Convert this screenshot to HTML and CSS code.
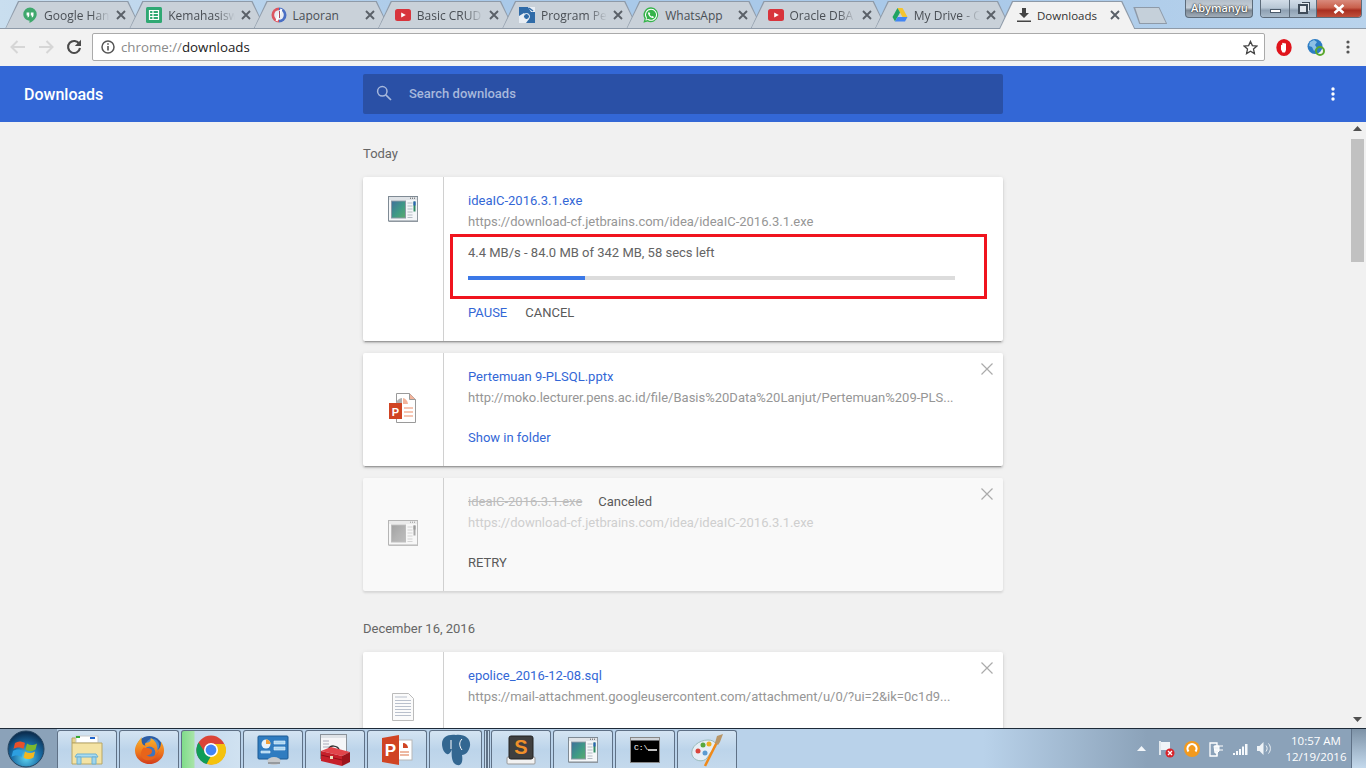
FILE: index.html
```html
<!DOCTYPE html>
<html>

<head>
    <title>Downloads</title>
    <link rel="stylesheet" href="styles.css">
</head>

<body>
    <svg class="sprite">
        <defs>
            <linearGradient id="app-pane" x1="0" y1="0" x2="1" y2="1">
                <stop offset="0" stop-color="#3f6f9c" />
                <stop offset=".55" stop-color="#3f9a86" />
                <stop offset="1" stop-color="#5cab6c" />
            </linearGradient>
        </defs>
        <symbol id="yt" viewBox="0 0 16 16">
            <rect x="0" y="2" width="16" height="12" rx="2.5" fill="#d8343c" />
            <path d="M6.2 5.4 L10.8 8 L6.2 10.6 Z" fill="#fff" />
        </symbol>
        <symbol id="tab-x" viewBox="0 0 10 10">
            <path d="M1 1 L9 9 M9 1 L1 9" stroke="#5a6068" stroke-width="1.9" fill="none" />
        </symbol>
        <symbol id="card-x" viewBox="0 0 12 12">
            <path d="M.5 .5 L11.5 11.5 M11.5 .5 L.5 11.5" stroke="#ababab" stroke-width="1.2" fill="none" />
        </symbol>
        <symbol id="app-icon" viewBox="0 0 30 26">
            <rect x=".5" y=".5" width="29" height="24.5" fill="#f4f6f8" stroke="#7f8a94" />
            <path d="M1 25.500h29M29.500 1v25" stroke="#8f979f" />
            <rect x="1" y="1" width="28" height="3" fill="#dfe3e7" />
            <path d="M24 2.2h1M26 2.2h1M22 2.2h1" stroke="#555" />
            <rect x="3.5" y="5" width="14" height="17" fill="url(#app-pane)" stroke="#8c99a5" />
            <path d="M19.500 7h5M19.500 10h5M19.500 13h5M19.500 16h5M19.500 19h5M19.500 21.500h5" stroke="#b4bcc4" />
            <rect x="25.500" y="5.500" width="2" height="10" fill="#2f8a63" />
            <rect x="25.500" y="5.500" width="2" height="4" fill="#2b62b8" />
        </symbol>
    </svg>

    <div class="tabstrip">
        <div class="tab">
            <svg class="favicon" viewBox="0 0 16 16"><path d="M8 .5a6.700 6.700 0 0 0-6.700 6.700c0 3.700 3 6.300 6.200 6.300V16c3.600-1.700 7.200-5 7.200-8.800A6.700 6.700 0 0 0 8 .5z" fill="#3fa86d" /><path d="M4.600 5.500h2.700v2.700c0 1.200-.7 2-1.700 2.300v-2H4.600zM8.800 5.500h2.700v2.700c0 1.200-.7 2-1.700 2.300v-2H8.800z" fill="#fff" /></svg>
            <span class="tab-title fade">Google Han</span>
            <svg class="tab-close"><use href="#tab-x" /></svg>
        </div>
        <div class="tab">
            <svg class="favicon" viewBox="0 0 16 16"><rect width="16" height="16" rx="1.500" fill="#2fa873" /><path d="M3.500 3.500h9v9h-9zM3.500 6.500h9M3.500 9.500h9M7 3.500v9" stroke="#fff" stroke-width="1.200" fill="none" /></svg>
            <span class="tab-title fade">Kemahasisw</span>
            <svg class="tab-close"><use href="#tab-x" /></svg>
        </div>
        <div class="tab">
            <svg class="favicon" viewBox="0 0 16 16"><path d="M8 .5a7.500 7.500 0 0 0 0 15z" fill="#dc5560" /><path d="M8 .5a7.500 7.500 0 0 1 0 15z" fill="#4a6fc4" /><circle cx="8" cy="8" r="4.800" fill="#e9edf3" /><path d="M5.500 14 L10.500 2" stroke="#fff" stroke-width="2" /><path d="M8.500 4v7" stroke="#b0475c" /></svg>
            <span class="tab-title">Laporan</span>
            <svg class="tab-close"><use href="#tab-x" /></svg>
        </div>
        <div class="tab">
            <svg class="favicon"><use href="#yt" /></svg>
            <span class="tab-title fade">Basic CRUD</span>
            <svg class="tab-close"><use href="#tab-x" /></svg>
        </div>
        <div class="tab">
            <svg class="favicon" viewBox="0 0 16 16"><rect width="16" height="16" fill="#2f6ba8" /><path d="M9 0h7v5h-4zM0 9l5-3 5 6-3 4H0z" fill="#e8eef5" /><circle cx="7.500" cy="9.500" r="3" fill="#2f6ba8" stroke="#fff" /><path d="M10 1l4 3" stroke="#2f6ba8" stroke-width="1.500" /></svg>
            <span class="tab-title fade">Program Pe</span>
            <svg class="tab-close"><use href="#tab-x" /></svg>
        </div>
        <div class="tab">
            <svg class="favicon" viewBox="0 0 16 16"><path d="M8 .3a7.500 7.500 0 0 0-6.400 11.400L.4 15.700l4.100-1.100A7.500 7.500 0 1 0 8 .3z" fill="#35b34a" /><path d="M8 1.800a6 6 0 0 0-5 9.300l-.6 2.400 2.500-.6A6 6 0 1 0 8 1.800z" fill="#fff" /><path d="M8 2.800a5 5 0 0 0-4.100 7.900l-.4 1.700 1.800-.4A5 5 0 1 0 8 2.800z" fill="#35b34a" /><path d="M6 5c-.6.200-1 .9-.9 1.700.3 1.800 2.300 3.900 4.200 4.200.8.100 1.500-.4 1.700-1l-1.600-1-.7.600c-.9-.4-1.600-1.100-2-2l.6-.8z" fill="#fff" /></svg>
            <span class="tab-title">WhatsApp</span>
            <svg class="tab-close"><use href="#tab-x" /></svg>
        </div>
        <div class="tab">
            <svg class="favicon"><use href="#yt" /></svg>
            <span class="tab-title fade">Oracle DBA</span>
            <svg class="tab-close"><use href="#tab-x" /></svg>
        </div>
        <div class="tab">
            <svg class="favicon" viewBox="0 0 16 16"><path d="M5.500 1h5l5 9h-5z" fill="#f4c430" /><path d="M5.500 1l-5 9 2.500 4.500 5-9z" fill="#1fa463" /><path d="M3 14.500l2.500-4.500h10L13 14.500z" fill="#4285f4" /></svg>
            <span class="tab-title fade">My Drive - C</span>
            <svg class="tab-close"><use href="#tab-x" /></svg>
        </div>
        <div class="tab active">
            <svg class="favicon" viewBox="0 0 16 16"><path d="M6 1h4v5h3l-5 5-5-5h3zM1 13.500h14V15H1z" fill="#444" /></svg>
            <span class="tab-title">Downloads</span>
            <svg class="tab-close"><use href="#tab-x" /></svg>
        </div>
        <div class="new-tab"></div>
        <div class="user-badge">Abymanyu</div>
        <div class="win-controls">
            <div class="win-btn min"><span class="min-bar"></span></div>
            <div class="win-btn restore"><span class="restore-box"></span></div>
            <div class="win-btn close">
                <svg width="14" height="10" viewBox="0 0 14 10"><path d="M2.500 1 L11.500 9 M11.500 1 L2.500 9" stroke="#fff" stroke-width="2.600" /></svg>
            </div>
        </div>
    </div>

    <div class="toolbar">
        <div class="tool-btn">
            <svg width="16" height="14" viewBox="0 0 16 14"><path d="M15 7H2M7.500 1 L1.500 7 L7.500 13" stroke="#d6d6d6" stroke-width="2" fill="none" /></svg>
        </div>
        <div class="tool-btn">
            <svg width="16" height="14" viewBox="0 0 16 14"><path d="M1 7h13M8.500 1 L14.500 7 L8.500 13" stroke="#d6d6d6" stroke-width="2" fill="none" /></svg>
        </div>
        <div class="tool-btn">
            <svg width="16" height="16" viewBox="0 0 16 16"><path d="M13.300 5A6 6 0 1 0 14 9" stroke="#4a4a4a" stroke-width="2.100" fill="none" /><path d="M15 .8V7H8.800z" fill="#4a4a4a" /></svg>
        </div>
        <div class="omnibox">
            <svg class="info" width="14" height="14" viewBox="0 0 14 14"><circle cx="7" cy="7" r="6" stroke="#555" stroke-width="1.500" fill="none" /><path d="M7 6v4.500M7 3.300v1.500" stroke="#555" stroke-width="1.600" /></svg>
            <span class="url"><span class="url-scheme">chrome://</span>downloads</span>
            <svg class="star" width="15" height="15" viewBox="0 0 16 16"><path d="M8 1.500l2 4.500 4.800.5-3.600 3.200 1 4.800L8 12l-4.200 2.500 1-4.800L1.200 6.500 6 6z" stroke="#444" stroke-width="1.400" fill="none" /></svg>
        </div>
        <div class="extensions">
            <div class="ext-btn">
                <svg width="16" height="17" viewBox="0 0 16 17"><ellipse cx="8" cy="8.500" rx="6.500" ry="7.200" stroke="#e0141c" stroke-width="2.400" fill="#e0141c" /><path d="M5 6.500c0-1 1.200-1 1.200 0V4.500c0-1 1.200-1 1.200 0 0-1 1.300-1 1.300 0v.5c0-1 1.300-1 1.300 0v6l-1 2.500H6.500L5 10.500z" fill="#fff" /></svg>
            </div>
            <div class="ext-btn">
                <svg width="18" height="18" viewBox="0 0 18 18"><circle cx="8" cy="8.500" r="7.500" fill="#2c7cc4" /><path d="M3 4l4-2 3 2-2 3 2 3-3 3-2-4-3-1z" fill="#8cc0e6" /><circle cx="13" cy="13" r="4" fill="none" stroke="#5aa82e" stroke-width="2" /></svg>
            </div>
            <div class="ext-btn">
                <svg width="4" height="14" viewBox="0 0 4 14"><circle cx="2" cy="2" r="1.600" fill="#555" /><circle cx="2" cy="7" r="1.600" fill="#555" /><circle cx="2" cy="12" r="1.600" fill="#555" /></svg>
            </div>
        </div>
    </div>

    <header class="dl-header">
        <div class="dl-heading">Downloads</div>
        <div class="search-box">
            <svg width="16" height="16" viewBox="0 0 16 16"><circle cx="6.300" cy="6.300" r="4.700" stroke="#a7b8dc" stroke-width="1.500" fill="none" /><path d="M9.800 9.800 L15 15" stroke="#a7b8dc" stroke-width="1.700" /></svg>
            <span>Search downloads</span>
        </div>
        <div class="header-menu">
            <svg width="4" height="14" viewBox="0 0 4 14"><circle cx="2" cy="2" r="1.700" fill="#fff" /><circle cx="2" cy="7" r="1.700" fill="#fff" /><circle cx="2" cy="12" r="1.700" fill="#fff" /></svg>
        </div>
    </header>

    <main class="content">
        <div class="column">
            <div class="date-label first">Today</div>

            <div class="card">
                <div class="card-icon top">
                    <svg width="30" height="26"><use href="#app-icon" /></svg>
                </div>
                <div class="card-body">
                    <a class="file-name">ideaIC-2016.3.1.exe</a>
                    <div class="file-url">https://download-cf.jetbrains.com/idea/ideaIC-2016.3.1.exe</div>
                    <div class="status">4.4 MB/s - 84.0 MB of 342 MB, 58 secs left</div>
                    <div class="progress"><div class="progress-fill" style="width: 24%"></div></div>
                    <div class="actions">
                        <a class="link-blue">PAUSE</a>
                        <a class="link-grey">CANCEL</a>
                    </div>
                </div>
                <div class="highlight"></div>
            </div>

            <div class="card">
                <div class="card-icon">
                    <svg width="27" height="30" viewBox="0 0 27 30">
                        <path d="M7.500 .5h13l6 6v23h-19z" fill="#fff" stroke="#9a9a9a" />
                        <path d="M20.500 .5v6h6" fill="#f3b49b" stroke="#9a9a9a" />
                        <path d="M13 5a7 7 0 0 0-4 12l4-5z" fill="#b0b0b0" />
                        <path d="M14 5a7 7 0 0 1 5 6h-5z" fill="#f3b49b" />
                        <path d="M15 15h9M15 19h9M15 23h9" stroke="#f3b49b" stroke-width="1.500" />
                        <rect x="0" y="10" width="13" height="16" fill="#d04423" />
                        <text x="6.500" y="22.500" class="ppt-letter">P</text>
                    </svg>
                </div>
                <div class="card-body">
                    <a class="file-name">Pertemuan 9-PLSQL.pptx</a>
                    <div class="file-url">http://moko.lecturer.pens.ac.id/file/Basis%20Data%20Lanjut/Pertemuan%209-PLS...</div>
                    <div class="actions tall">
                        <a class="link-blue">Show in folder</a>
                    </div>
                </div>
                <svg class="card-close"><use href="#card-x" /></svg>
            </div>

            <div class="card canceled">
                <div class="card-icon">
                    <svg class="muted-icon" width="30" height="26"><use href="#app-icon" /></svg>
                </div>
                <div class="card-body">
                    <div class="name-row">
                        <a class="file-name">ideaIC-2016.3.1.exe</a>
                        <span class="tag">Canceled</span>
                    </div>
                    <div class="file-url">https://download-cf.jetbrains.com/idea/ideaIC-2016.3.1.exe</div>
                    <div class="actions tall">
                        <a class="link-grey">RETRY</a>
                    </div>
                </div>
                <svg class="card-close"><use href="#card-x" /></svg>
            </div>

            <div class="date-label">December 16, 2016</div>

            <div class="card">
                <div class="card-icon">
                    <svg width="24" height="28" viewBox="0 0 24 28">
                        <path d="M1.500 .5h16l5 5v22h-21z" fill="#fbfbfb" stroke="#bbb" />
                        <path d="M4 4h12M4 7.500h16M4 10.500h16M4 13.500h16M4 16.500h16M4 19.500h16M4 22.500h16" stroke="#b9c0cc" />
                    </svg>
                </div>
                <div class="card-body">
                    <a class="file-name">epolice_2016-12-08.sql</a>
                    <div class="file-url">https://mail-attachment.googleusercontent.com/attachment/u/0/?ui=2&amp;ik=0c1d9...</div>
                </div>
                <svg class="card-close"><use href="#card-x" /></svg>
            </div>
        </div>

        <div class="scrollbar">
            <svg class="scroll-arrow" width="9" height="5" viewBox="0 0 9 5"><path d="M4.500 0 L9 5 H0 Z" fill="#505050" /></svg>
            <div class="scroll-track"><div class="scroll-thumb"></div></div>
            <svg class="scroll-arrow" width="9" height="5" viewBox="0 0 9 5"><path d="M0 0 H9 L4.500 5 Z" fill="#505050" /></svg>
        </div>
    </main>

    <footer class="taskbar">
        <div class="start">
            <svg width="38" height="38" viewBox="0 0 38 38">
                <defs>
                    <radialGradient id="orb" cx="50%" cy="75%" r="70%">
                        <stop offset="0" stop-color="#5fd4f0" />
                        <stop offset=".55" stop-color="#1a6ea8" />
                        <stop offset="1" stop-color="#0c2f52" />
                    </radialGradient>
                </defs>
                <circle cx="19" cy="19" r="18" fill="url(#orb)" stroke="#26445f" />
                <path d="M8 13c3-2 6-2 10 0l-1.500 6c-3-2-7-2-10 0z" fill="#e8502a" />
                <path d="M20 13.500c3 2 6 2 10 0l-1.500 6c-4 2-7 2-10 0z" fill="#7cb82f" />
                <path d="M6 21c3-2 7-2 10 0l-1.500 6c-3-2-7-2-10 0z" fill="#2d9fe0" />
                <path d="M18 21.500c3 2 6 2 10 0l-1.500 6c-4 2-7 2-10 0z" fill="#f2b71f" />
            </svg>
        </div>
        <div class="task-buttons">
            <div class="task-btn">
                <svg width="32" height="30" viewBox="0 0 32 30"><path d="M1 3h10l2 2h12l1 3H1z" fill="#e8d48e" stroke="#b8a665" /><rect x="5" y="1" width="22" height="7" fill="#fff" stroke="#c9c9c9" /><path d="M5 2h4" stroke="#3a3" stroke-width="2" /><path d="M19 3h5" stroke="#26c" stroke-width="2" /><path d="M1 8h30v21H1z" fill="#f4e3a4" stroke="#b8a665" /><path d="M6 19h19l2 3H4z" fill="#a9dcf2" stroke="#6cb1d2" /><path d="M6 22h4v7H6zM21 22h4v7h-4z" fill="#9fd5ec" stroke="#6cb1d2" /></svg>
            </div>
            <div class="task-btn">
                <svg width="31" height="31" viewBox="0 0 32 32">
                    <defs>
                        <linearGradient id="fox" x1="0" y1="0" x2="0" y2="1">
                            <stop offset="0" stop-color="#f8b62c" />
                            <stop offset=".55" stop-color="#ee7a1e" />
                            <stop offset="1" stop-color="#d23c1c" />
                        </linearGradient>
                    </defs>
                    <circle cx="16" cy="16" r="14" fill="#2c5ea6" />
                    <circle cx="19" cy="12" r="7" fill="#4a8ad0" />
                    <path d="M8 3C4 8 1 12 1 17c0 8 7 14 15 14s15-6 15-14c0-3-1-6-3-9 0 4-1 7-4 9 1-5-2-11-7-13 1 3-1 5-4 5-2 0-2 2-1 3-3 0-5-3-4-9z" fill="url(#fox)" />
                    <circle cx="16" cy="19" r="6" fill="#3f74bd" />
                    <path d="M10 14c3 1 6 0 8 2 2 3-1 6-5 6 4 3 11 1 13-6-1 8-7 12-13 11-6-1-8-8-3-13z" fill="#e8641a" />
                </svg>
            </div>
            <div class="task-btn running">
                <svg width="30" height="30" viewBox="0 0 30 30"><circle cx="15" cy="15" r="14.500" fill="#db4437" /><path d="M15 9h13.500A14.500 14.500 0 0 1 11 29z" fill="#f4c20d" /><path d="M15 21 L10.500 29A14.500 14.500 0 0 1 2.500 7.500 L10 19z" fill="#0f9d58" /><circle cx="15" cy="15" r="7" fill="#fff" /><circle cx="15" cy="15" r="5.400" fill="#4285f4" /></svg>
            </div>
            <div class="task-btn">
                <svg width="32" height="32" viewBox="0 0 32 32"><rect x="1" y="2" width="30" height="23" rx="1" fill="#2f7cc0" stroke="#1c5a94" /><circle cx="9" cy="10" r="4.500" fill="#e8f2fa" /><path d="M9 10V5.500A4.500 4.500 0 0 1 13.500 10z" fill="#f2a13a" /><path d="M17 7h11v3H17zM17 13h11v3H17zM4 17h9v2H4z" fill="#a8d6f2" stroke="#e8f2fa" stroke-width=".6" /><ellipse cx="17" cy="27" rx="6.500" ry="4" fill="#c6c9cc" /><path d="M11 28h12v2H11z" fill="#969a9e" /></svg>
            </div>
            <div class="task-btn">
                <svg width="32" height="32" viewBox="0 0 32 32">
                    <rect x="1.500" y=".5" width="26" height="24" fill="#f5f6f8" stroke="#8a929a" />
                    <rect x="2" y="1" width="25" height="3" fill="#dfe3e7" />
                    <path d="M4 7h6M4 10h6M4 13h6" stroke="#aab" />
                    <path d="M10 15c0-4 9-4 10 1" stroke="#333" stroke-width="1.500" fill="none" />
                    <path d="M2 17 L12 13 L31 18 L23 22 Z" fill="#e2444a" />
                    <path d="M2 17 L23 22 V32 L2 27 Z" fill="#c6202a" />
                    <path d="M23 22 L31 18 V28 L23 32 Z" fill="#9c141c" />
                    <path d="M2 21 L23 26" stroke="#8f1018" />
                    <rect x="11" y="22" width="3" height="3" fill="#e8e0c0" />
                </svg>
            </div>
            <div class="task-btn">
                <svg width="31" height="30" viewBox="0 0 31 30"><rect x="14" y="5" width="16" height="20" fill="#fff" stroke="#b8b8b8" /><path d="M18 17h9M18 20h9" stroke="#e8a184" stroke-width="1.500" /><path d="M21 8a5 5 0 0 1 5 5h-5z" fill="#d04423" /><path d="M0 3 L17 0 V30 L0 27 Z" fill="#d04423" /><text x="8.500" y="21" class="ppt-task-letter">P</text></svg>
            </div>
            <div class="task-btn narrow">
                <svg width="30" height="32" viewBox="0 0 30 32"><path d="M15 1C7 0 1 3 1 10c0 4 2 9 5 10 2 1 4-2 5-5-1 6 0 15 5 16 5 1 6-4 5-10 4 0 7-4 8-9 1-7-5-12-14-11z" fill="#336791" /><path d="M10 6v9M21 5c-3 3-3 7 0 11" stroke="#fff" stroke-width="1" fill="none" /></svg>
            </div>
            <div class="task-stack"></div>
            <div class="task-stack"></div>
            <div class="task-btn">
                <svg width="30" height="30" viewBox="0 0 30 30"><rect x="1" y="22" width="28" height="7" rx="1" fill="#f2f2f2" stroke="#999" /><rect x="3" y="1" width="24" height="23" rx="2" fill="#3f3f3f" stroke="#222" /><text x="15" y="19" class="sublime-letter">S</text></svg>
            </div>
            <div class="task-btn">
                <svg width="30" height="26"><use href="#app-icon" /></svg>
            </div>
            <div class="task-btn">
                <svg width="30" height="26" viewBox="0 0 30 26"><rect x=".5" y=".5" width="29" height="25" fill="#000" stroke="#888" /><rect x="1" y="1" width="28" height="2.500" fill="#cfd4d9" /><text x="4" y="13" class="cmd-prompt">C:\</text><path d="M18 13h9" stroke="#fff" stroke-width="1.500" /></svg>
            </div>
            <div class="task-btn">
                <svg width="34" height="34" viewBox="0 0 34 34"><path d="M2 22C0 14 9 7 18 7c8 0 10 6 6 9-3 2-4 5-7 9-4 5-13 3-15-3z" fill="#e6eef5" stroke="#9bb" /><circle cx="8" cy="18" r="2.500" fill="#d9463c" /><circle cx="13" cy="12" r="2.500" fill="#58a83c" /><circle cx="19" cy="11" r="2.500" fill="#ecae20" /><circle cx="15" cy="20" r="2.500" fill="#5d9bd0" /><path d="M15 33 L27 9" stroke="#ef8a1a" stroke-width="2.500" /><path d="M25 10l2-7 6-2-3 8-2 3z" fill="#b89668" /></svg>
            </div>
        </div>
        <div class="tray">
            <svg width="9" height="5" viewBox="0 0 9 5"><path d="M4.500 0 L9 5 H0 Z" fill="#f2f6fa" /></svg>
            <svg class="tray-flag" width="17" height="18" viewBox="0 0 17 18"><path d="M2 1v14" stroke="#fff" stroke-width="1.500" /><path d="M3 2h9v8H3z" fill="#f0f4f8" /><circle cx="12" cy="13" r="4.500" fill="#d8232a" /><path d="M10 11l4 4M14 11l-4 4" stroke="#fff" stroke-width="1.300" /></svg>
            <svg width="16" height="16" viewBox="0 0 16 16"><circle cx="8" cy="8" r="8" fill="#f39a1e" /><path d="M4.500 10.500A4.500 4.500 0 1 1 11.500 10.500" stroke="#fff" stroke-width="2.200" fill="none" /></svg>
            <svg width="15" height="16" viewBox="0 0 15 16"><path d="M1 2h7v13H1z" fill="none" stroke="#fff" stroke-width="1.300" /><path d="M6 5h8M6 9h8M5 5h5v5l-2 2H6z" stroke="#fff" fill="#eef3f7" /><path d="M8 12v3" stroke="#fff" /></svg>
            <svg width="15" height="12" viewBox="0 0 15 12"><path d="M0 10h2v2H0zM3 8h2v4H3zM6 6h2v6H6zM9 3.500h2V12H9zM12 1h2.500v11H12z" fill="#f6f9fc" /></svg>
            <svg width="15" height="15" viewBox="0 0 15 15"><path d="M0 5h2.500L6.500 1v13L2.500 10H0z" fill="#eef3f7" /><path d="M9 4.500c1.500 1.800 1.500 4.200 0 6M11.500 2.500c2.500 3 2.500 7 0 10" stroke="#eef3f7" fill="none" /></svg>
        </div>
        <div class="clock">
            <div>10:57 AM</div>
            <div>12/19/2016</div>
        </div>
        <div class="show-desktop"></div>
    </footer>
</body>

</html>
```

FILE: styles.css
```css
* {
    box-sizing: border-box;
}

html,
body {
    margin: 0;
    height: 100%;
}

body {
    display: flex;
    flex-direction: column;
    height: 768px;
    overflow: hidden;
    font-family: Roboto, "Liberation Sans", sans-serif;
    font-size: 13px;
    background-color: #f1f1f1;
}

.sprite {
    display: block;
    width: 0;
    height: 0;
}

/* tab strip */
.tabstrip {
    display: flex;
    flex: none;
    height: 29px;
    padding-left: 5px;
    padding-top: 1px;
    background: linear-gradient(90deg, #c9deef 0, #a9c9e9 35%, #a9c9e9 70%, #b9d3ec 100%);
    box-shadow: inset 0 -1px #8e9aa8;
}

.tab {
    position: relative;
    isolation: isolate;
    display: flex;
    align-items: center;
    flex: none;
    width: 136.25px;
    height: 28px;
    margin-right: -12px;
    padding: 0 15px 0 17px;
    font-family: "Open Sans", "Noto Sans", sans-serif;
    font-size: 12px;
    color: #4a4f55;
}

.tab::before,
.tab::after {
    content: "";
    position: absolute;
    z-index: -1;
}

.tab::before {
    inset: 0;
    background-color: #8e9aa8;
    clip-path: polygon(0 100%, 13px 0, calc(100% - 13px) 0, 100% 100%);
}

.tab::after {
    inset: 1px 1px 1px 1px;
    background-color: #c9d1d9;
    clip-path: polygon(0 100%, 13px 0, calc(100% - 13px) 0, 100% 100%);
}

.tab.active {
    z-index: 2;
    color: #333;
}

.tab.active::after {
    bottom: 0;
    background-color: #f2f2f2;
}

.favicon {
    flex: none;
    width: 16px;
    height: 16px;
}

.tab-title {
    flex: 1;
    min-width: 0;
    margin-left: 6px;
    white-space: nowrap;
}

.tab-title.fade {
    -webkit-mask-image: linear-gradient(90deg, #000 72%, transparent 100%);
    mask-image: linear-gradient(90deg, #000 72%, transparent 100%);
}

.tab.active .tab-title {
    margin-left: 5px;
    font-size: 11.500px;
}

.tab-close {
    flex: none;
    width: 10px;
    height: 10px;
    margin-left: 6px;
}

.new-tab {
    flex: none;
    width: 34px;
    height: 17px;
    margin: 6px 0 0 10px;
    background-color: #8e9aa8;
    clip-path: polygon(0 0, 26px 0, 100% 100%, 6px 100%);
}

.new-tab::after {
    content: "";
    display: block;
    width: 100%;
    height: 100%;
    background-color: #c5d0da;
    clip-path: polygon(2px 1px, 25.500px 1px, 32.500px 16px, 7px 16px);
}

.user-badge {
    flex: none;
    width: 68px;
    height: 18px;
    margin: -1px 0 0 18px;
    border: 1px solid #5c6b7a;
    border-top: 0;
    border-radius: 0 0 4px 4px;
    background: linear-gradient(#b3bec9, #c6cfd8 45%, #7d8995 60%, #a0acb8);
    color: #fff;
    font-family: "Open Sans", sans-serif;
    font-size: 11px;
    font-weight: 600;
    line-height: 16px;
    text-align: center;
    text-shadow: 0 0 2px #222, 0 0 1px #222;
}

.win-controls {
    display: flex;
    flex: none;
    width: 102px;
    height: 18px;
    margin: -1px 0 0 7px;
    border: 1px solid #5c6b7a;
    border-top: 0;
    border-radius: 0 0 4px 4px;
    overflow: hidden;
}

.win-btn {
    display: flex;
    align-items: center;
    justify-content: center;
    background: linear-gradient(#d2dde8, #b9c8d6 45%, #8fa1b3 60%, #a8b9c9);
    border-right: 1px solid #5c6b7a;
}

.min {
    width: 29px;
}

.restore {
    width: 27px;
}

.close {
    flex: 1;
    border-right: 0;
    background: linear-gradient(#d98a7c, #c9604c 45%, #a92f20 60%, #c0503c);
}

.min-bar {
    width: 11px;
    height: 4px;
    margin-top: 5px;
    border: 1px solid #4a5a6a;
    background-color: #fff;
}

.restore-box {
    width: 10px;
    height: 10px;
    border: 2px solid #3f4c59;
    box-shadow: 2px -2px 0 -1px #e6edf3, 3px -3px 0 -1px #3f4c59;
    background-color: #dfe6ed;
}

/* toolbar */
.toolbar {
    display: flex;
    align-items: center;
    flex: none;
    height: 37px;
    padding: 0 2px 1px 4px;
    background-color: #f2f2f2;
}

.tool-btn {
    display: flex;
    align-items: center;
    justify-content: center;
    flex: none;
    width: 28px;
    height: 28px;
}

.omnibox {
    display: flex;
    align-items: center;
    flex: 1;
    height: 28px;
    margin: 0 3px 0 4px;
    padding: 0 6px 0 8px;
    border: 1px solid #aaa;
    border-radius: 2px;
    background-color: #fff;
}

.url {
    flex: 1;
    margin-left: 6px;
    font-family: "Open Sans", "Noto Sans", sans-serif;
    font-size: 13.300px;
    color: #222;
}

.url-scheme {
    color: #8a8a8a;
}

.extensions {
    display: flex;
    flex: none;
}

.ext-btn {
    display: flex;
    align-items: center;
    justify-content: center;
    width: 32px;
    height: 28px;
}

/* downloads page header */
.dl-header {
    display: grid;
    grid-template-columns: 1fr 640px 1fr;
    align-items: center;
    flex: none;
    height: 56px;
    background-color: #3367d6;
}

.dl-heading {
    padding: 1px 0 0 24px;
    font-size: 16px;
    font-weight: 500;
    color: #fff;
}

.search-box {
    display: flex;
    align-items: center;
    gap: 17px;
    height: 40px;
    padding: 0 0 2px 13px;
    border-radius: 2px;
    background-color: #2a50a6;
    color: #a7b8dc;
    font-weight: 500;
}

.header-menu {
    display: flex;
    justify-content: flex-end;
    padding-right: 31px;
}

/* list */
.content {
    position: relative;
    flex: 1;
    min-height: 0;
    overflow: hidden;
}

.column {
    width: 640px;
    margin: 0 auto;
}

.date-label {
    height: 20px;
    margin: 27px 0 14px;
    line-height: 22px;
    color: #666;
}

.date-label.first {
    margin-top: 21px;
}

.card {
    position: relative;
    display: flex;
    min-height: 113px;
    margin-bottom: 12px;
    border-radius: 2px;
    background-color: #fff;
    box-shadow: 0 2px 2px rgba(0, 0, 0, .14), 0 1px 5px rgba(0, 0, 0, .1), 0 3px 1px -2px rgba(0, 0, 0, .2);
}

.card-icon {
    display: flex;
    align-items: center;
    justify-content: center;
    flex: none;
    width: 81px;
    padding: 0 1px 3px 0;
    border-right: 1px solid #d0d0d0;
}

.card-icon.top {
    align-items: flex-start;
    padding-top: 19px;
}

.card-body {
    flex: 1;
    min-width: 0;
    padding: 13px 48px 18px 24px;
    line-height: 21px;
}

.file-name {
    color: #3367d6;
}

.file-url {
    color: #969696;
    white-space: nowrap;
}

.status {
    margin-top: 10px;
    color: #646464;
}

.progress {
    height: 4px;
    margin-top: 13px;
    background-color: #dcdcdc;
}

.progress-fill {
    height: 100%;
    background-color: #3b78e7;
}

.actions {
    display: flex;
    gap: 18px;
    margin-top: 22px;
}

.actions.tall {
    margin-top: 19px;
}

.link-blue {
    color: #3367d6;
}

.link-grey {
    color: #5a5a5a;
}

.highlight {
    position: absolute;
    left: 87px;
    top: 57px;
    width: 537px;
    height: 65px;
    border: 3px solid #f0141e;
}

.card-close {
    position: absolute;
    top: 10px;
    right: 10px;
    width: 12px;
    height: 12px;
}

.canceled {
    background-color: #f9f9f9;
    box-shadow: 0 2px 2px rgba(0, 0, 0, .08), 0 1px 4px rgba(0, 0, 0, .06);
}

.name-row {
    display: flex;
    gap: 16px;
}

.canceled .file-name {
    color: #bdbdbd;
    text-decoration: line-through;
}

.canceled .file-url {
    color: #cfcfcf;
}

.tag {
    color: #5a5a5a;
}

.muted-icon {
    filter: grayscale(1) opacity(.6);
}

.ppt-letter {
    fill: #fff;
    font-family: "Liberation Sans", sans-serif;
    font-size: 11px;
    font-weight: 700;
    text-anchor: middle;
}

.ppt-task-letter {
    fill: #fff;
    font-family: "Liberation Sans", sans-serif;
    font-size: 17px;
    font-weight: 700;
    text-anchor: middle;
}

.sublime-letter {
    fill: #f0902a;
    font-family: "Liberation Sans", sans-serif;
    font-size: 20px;
    font-weight: 700;
    text-anchor: middle;
}

.cmd-prompt {
    fill: #fff;
    font-family: "Liberation Mono", monospace;
    font-size: 8px;
}

/* overlay scrollbar */
.scrollbar {
    position: absolute;
    top: 0;
    right: 0;
    bottom: 0;
    display: flex;
    flex-direction: column;
    align-items: center;
    width: 17px;
    padding: 4px 0 6px;
    background-color: #f1f1f1;
}

.scroll-track {
    flex: 1;
    width: 100%;
    padding: 8px 2px 0;
}

.scroll-thumb {
    width: 13px;
    height: 123px;
    background-color: #c1c1c1;
}

/* windows taskbar */
.taskbar {
    display: flex;
    flex: none;
    height: 40px;
    border-top: 1px solid #1d2a38;
    background: linear-gradient(90deg, #b9d2ea 0, #b9d2ea 72%, #8ba2b9 84%, #8ba2b9 100%);
    color: #fff;
}

.start {
    display: flex;
    align-items: center;
    justify-content: center;
    flex: none;
    width: 57px;
    padding-right: 5px;
    background-color: #8ba2b9;
}

.task-buttons {
    display: flex;
    flex: none;
    gap: 2px;
    padding-top: 1px;
}

.task-btn {
    display: flex;
    align-items: center;
    justify-content: center;
    flex: none;
    width: 60px;
    height: 38px;
    border: 1px solid #5f7186;
    border-bottom: 0;
    border-radius: 3px 3px 0 0;
    background: linear-gradient(#d4e4f2, #bcd4ea 50%, #c4d9ec);
}

.task-btn.narrow {
    width: 53px;
}

.task-btn.running {
    background: linear-gradient(90deg, #7fdc8a 0, #a8e4a8 12px, #c4d9ec 13px, #d0e2f1 100%);
}

.task-stack {
    flex: none;
    width: 3px;
    height: 38px;
    margin: 0 -1px 0 -.5px;
    border: 1px solid #5f7186;
    border-bottom: 0;
    background-color: #c4d9ec;
}

.tray {
    display: flex;
    align-items: center;
    flex: none;
    gap: 9px;
    margin-left: auto;
    padding-right: 13px;
}

.tray-flag {
    margin-left: 3px;
}

.clock {
    flex: none;
    width: 62px;
    font-family: "Open Sans", "Noto Sans", sans-serif;
    font-size: 11.500px;
    line-height: 16px;
    padding-top: 4px;
    text-align: center;
    white-space: nowrap;
}

.show-desktop {
    flex: none;
    width: 15px;
    margin-left: 4px;
    border-left: 1px solid #5f7186;
    background: linear-gradient(#7d92a6, #a8bdd1 60%, #c4d9ec);
}
```
